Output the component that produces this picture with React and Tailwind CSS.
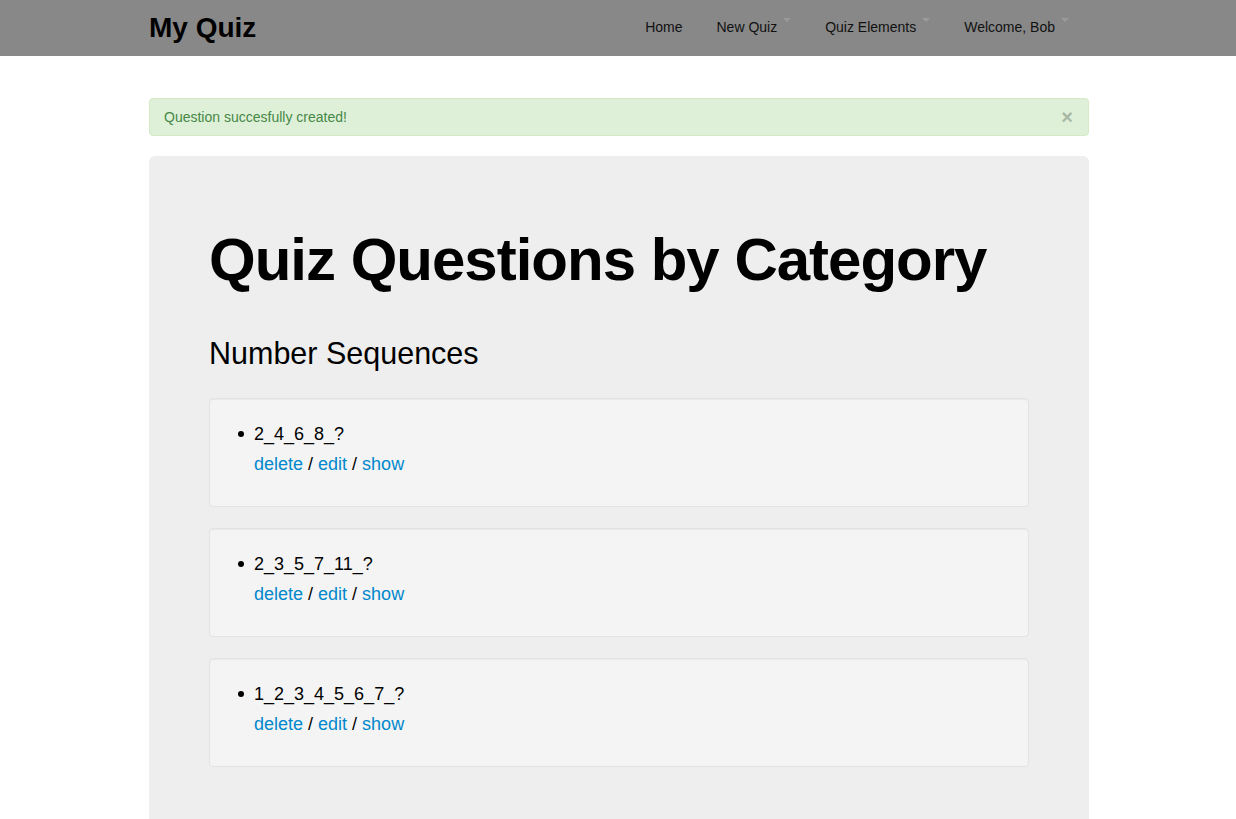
import React from 'react';

const questions = ['2_4_6_8_?', '2_3_5_7_11_?', '1_2_3_4_5_6_7_?'];

const Caret = () => (
  <span className="ml-[6px] inline-block w-0 h-0 border-l-[4px] border-r-[4px] border-t-[4px] border-l-transparent border-r-transparent border-t-[#9a9a9a] -translate-y-[8px]" />
);

const NavItem = ({ label, caret }) => (
  <a href="#" className="px-[15px] text-[14px] text-[#111] flex items-center">
    {label}
    {caret && <Caret />}
  </a>
);

export default function App() {
  return (
    <div className="min-h-[819px] bg-white font-['Liberation_Sans',Arial,sans-serif]">
      {/* Navbar */}
      <div className="h-[56px] bg-[#888888]">
        <div className="w-[940px] ml-[149px] h-full flex items-center justify-between">
          <a href="#" className="text-[28px] font-bold text-black leading-none">My Quiz</a>
          <nav className="flex items-center gap-[4px] mr-[5px] -mt-[1px]">
            <NavItem label="Home" />
            <NavItem label="New Quiz" caret />
            <NavItem label="Quiz Elements" caret />
            <NavItem label="Welcome, Bob" caret />
          </nav>
        </div>
      </div>

      <div className="w-[940px] ml-[149px] pt-[42px]">
        {/* Alert */}
        <div className="h-[38px] px-[14px] flex items-center justify-between bg-[#dff0d8] border border-[#d6e9c6] rounded-[4px] text-[#468847] text-[14px]">
          <span>Question succesfully created!</span>
          <span className="text-[20px] font-bold text-[#a9b8a4] leading-none mr-[1px]">×</span>
        </div>

        {/* Hero */}
        <div className="mt-[20px] bg-[#eeeeee] rounded-[6px] px-[60px] pt-[74px] pb-[60px] text-[18px] leading-[30px]">
          <h1 className="text-[60px] font-bold leading-[60px] tracking-[-1px] text-black">Quiz Questions by Category</h1>
          <h2 className="mt-[43px] text-[30.5px] leading-[40px] text-black">Number Sequences</h2>
          <div className="mt-[25px] w-[820px] flex flex-col gap-[21px]">
            {questions.map((q) => (
              <div key={q} className="h-[109px] bg-[#f4f4f4] border border-[#e3e3e3] rounded-[4px] shadow-[inset_0_1px_1px_rgba(0,0,0,0.05)] pt-[20px] pl-[28px]">
                <div className="flex">
                  <span className="w-[6px] h-[6px] rounded-full bg-black mt-[12px] mr-[10px] shrink-0" />
                  <div className="text-black">
                    {q}
                    <div>
                      <a href="#" className="text-[#0088cc]">delete</a> / <a href="#" className="text-[#0088cc]">edit</a> / <a href="#" className="text-[#0088cc]">show</a>
                    </div>
                  </div>
                </div>
              </div>
            ))}
          </div>
        </div>
      </div>
    </div>
  );
}
